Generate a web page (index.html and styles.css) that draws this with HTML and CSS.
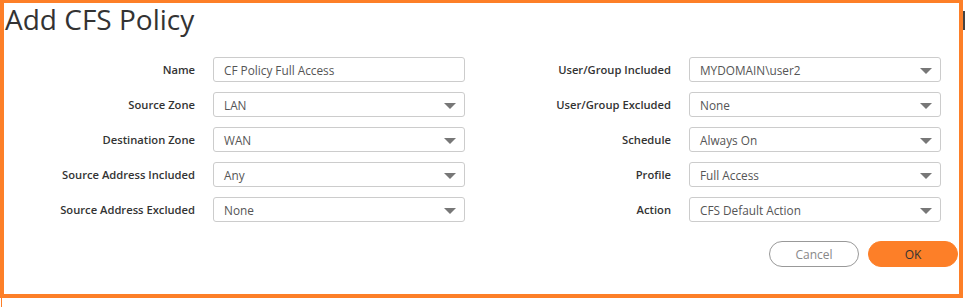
FILE: index.html
```html
<!DOCTYPE html>
<html lang="en">
<head>
    <meta charset="UTF-8">
    <title>Add CFS Policy</title>
    <link rel="stylesheet" href="styles.css">
</head>
<body>
    <div class="page">
        <div class="frame">
            <div class="dialog">
                <div class="title">Add CFS Policy</div>

                <div class="form">
                    <label class="label">Name</label>
                    <div class="field">CF Policy Full Access</div>
                    <label class="label">User/Group Included</label>
                    <div class="field select">MYDOMAIN\user2<span class="arrow"></span></div>

                    <label class="label">Source Zone</label>
                    <div class="field select">LAN<span class="arrow"></span></div>
                    <label class="label">User/Group Excluded</label>
                    <div class="field select">None<span class="arrow"></span></div>

                    <label class="label">Destination Zone</label>
                    <div class="field select">WAN<span class="arrow"></span></div>
                    <label class="label">Schedule</label>
                    <div class="field select">Always On<span class="arrow"></span></div>

                    <label class="label">Source Address Included</label>
                    <div class="field select">Any<span class="arrow"></span></div>
                    <label class="label">Profile</label>
                    <div class="field select">Full Access<span class="arrow"></span></div>

                    <label class="label">Source Address Excluded</label>
                    <div class="field select">None<span class="arrow"></span></div>
                    <label class="label">Action</label>
                    <div class="field select">CFS Default Action<span class="arrow"></span></div>
                </div>

                <div class="buttons">
                    <button class="btn cancel">Cancel</button>
                    <button class="btn ok">OK</button>
                </div>
            </div>
            <div class="tail"></div>
        </div>
        <div class="scrollmark"></div>
    </div>
</body>
</html>
```

FILE: styles.css
```css
body {
    margin: 0;
    background: #fff;
    font-family: "Open Sans", "Noto Sans", sans-serif;
    color: #333;
}

.page {
    display: flex;
    align-items: flex-start;
}

.frame {
    width: 963px;
}

.dialog {
    box-sizing: border-box;
    width: 963px;
    height: 298px;
    border: 4px solid #fd7f28;
    border-top-width: 3px;
    display: flex;
    flex-direction: column;
}

.tail {
    width: 1px;
    height: 9px;
    margin-left: 1px;
    background: #fd7f28;
}

.scrollmark {
    width: 2px;
    height: 19px;
    margin-top: 11px;
    background: #444;
}

.title {
    font-size: 28px;
    line-height: 32px;
    padding-left: 1px;
    color: #333;
}

.form {
    display: grid;
    grid-template-columns: 191px 252px 188px 252px;
    grid-auto-rows: 25px;
    column-gap: 18px;
    row-gap: 10px;
    margin-top: 22px;
}

.label {
    display: flex;
    align-items: center;
    justify-content: flex-end;
    font-size: 11.2px;
    font-weight: 600;
    color: #333;
}

.field {
    box-sizing: border-box;
    height: 25px;
    border: 1px solid #ccc;
    border-radius: 3px;
    padding: 0 8px 0 10px;
    display: flex;
    align-items: center;
    font-size: 11.8px;
    color: #555;
}

.select {
    justify-content: space-between;
}

.arrow {
    width: 0;
    height: 0;
    border-left: 6px solid transparent;
    border-right: 6px solid transparent;
    border-top: 6px solid #777;
    margin-top: 2px;
}

.buttons {
    display: flex;
    justify-content: flex-end;
    gap: 9px;
    margin-top: 19px;
    padding-right: 1px;
}

.btn {
    width: 90px;
    height: 26px;
    border-radius: 13px;
    font-family: "Open Sans", "Noto Sans", sans-serif;
    font-size: 12px;
    cursor: pointer;
}

.cancel {
    background: #fff;
    border: 1px solid #999;
    color: #888;
}

.ok {
    background: #fd7f28;
    border: 1px solid #fd7f28;
    color: #333;
}
```
